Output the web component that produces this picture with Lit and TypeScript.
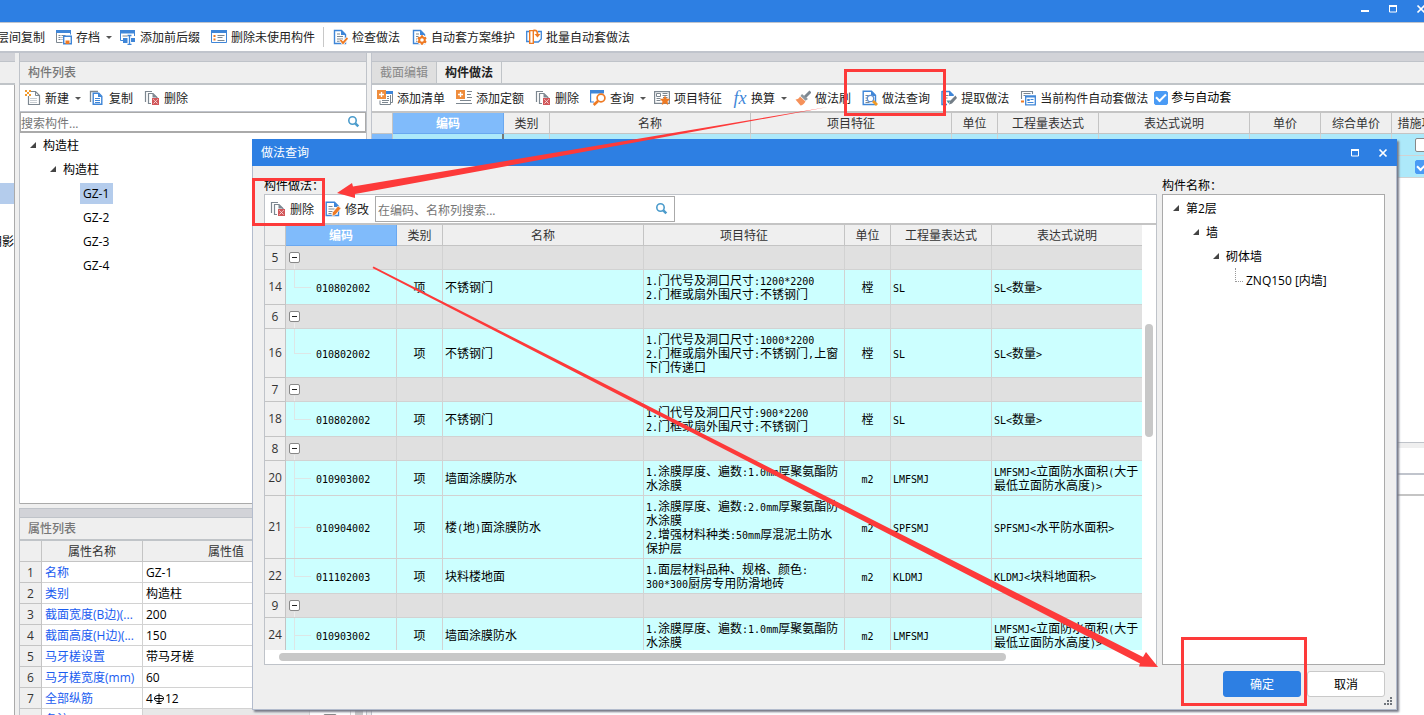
import { LitElement, html, svg, css, nothing, TemplateResult } from "lit";
import { customElement } from "lit/decorators.js";
import { classMap } from "lit/directives/class-map.js";

const GREY = "#7d8790";
const BLUE = "#3f86d8";
const ORANGE = "#ee7a24";

const docShape = svg`<path d="M2.500 1.500h7l4 4v9h-11z" fill="#fff" stroke=${BLUE} stroke-width="1.400"/><path d="M9 1l5 5H9z" fill=${BLUE}/>`;
const docLines = svg`<path d="M5 5h3M5 7.500h6M5 10h6M5 12.300h4" stroke=${GREY} stroke-width="1.100"/>`;

const ICONS: Record<string, TemplateResult> = {
  layers: svg`<path d="M1.500 4.500h9v9h-9zM4.500 1.500h10v9" fill="none" stroke=${BLUE}/>`,
  archive: svg`<path d="M.5 1.500h14v4" fill="none" stroke=${BLUE}/><path d="M0 1h15v3H0z" fill=${BLUE}/><path d="M.5 4v9.500h6" fill="none" stroke=${GREY}/><path d="M2.500 6.500h2m1 0h4M2.500 8.500h2m1 0h1M2.500 10.500h2m1 0h1" stroke=${GREY}/><path d="M7.700 7.200h7.600v7.600H7.700z" fill="#fff" stroke=${BLUE} stroke-width="1.400"/><path d="M9.500 11.500h4V15h-4z" fill=${ORANGE}/>`,
  rename: svg`<path d="M0 1h15v3.500H0z" fill=${BLUE}/><path d="M.5 4v7.500H3M14.500 4v3" fill="none" stroke=${BLUE}/><path d="M2.500 7h5" stroke=${GREY}/><path d="M3 9h4.500v5H3zM11 9h4v4h-4z" fill=${BLUE}/><path d="M7.500 6.500h4M9.500 6.500v9M7.500 15.500h4" stroke=${BLUE} stroke-width="1.300" fill="none"/>`,
  list: svg`<path d="M.5 1.500h15v12H.5z" fill="#fff" stroke=${BLUE}/><path d="M0 1h16v3H0z" fill=${BLUE}/><path d="M2.500 6h2v2h-2zM2.500 9.500h2v2h-2z" fill=${ORANGE}/><path d="M6.500 6.500h7M6.500 8.500h5M6.500 11.500h7" stroke=${GREY}/>`,
  check: svg`${docShape}${docLines}<path d="M8.500 11l2.500 3 4.500-5" fill="none" stroke="#fff" stroke-width="3.400"/><path d="M8.500 11l2.500 3 4.500-5" fill="none" stroke=${ORANGE} stroke-width="1.900"/>`,
  gear: svg`${docShape}${docLines}<circle cx="11" cy="11" r="5" fill="#fff"/><path d="M11 6.200v9.600M6.800 8.600l8.400 4.800M6.800 13.400l8.400-4.800" stroke=${ORANGE} stroke-width="2"/><circle cx="11" cy="11" r="2.800" fill="#fff" stroke=${ORANGE} stroke-width="2"/>`,
  batch: svg`<path d="M3 2.500H.7v10H3M12 2.500h3.300V10l-3 3H8" fill="none" stroke=${BLUE} stroke-width="1.300"/><path d="M3.700 1.600h3.600v12.800H3.700z" fill="#fff" stroke=${ORANGE} stroke-width="1.400"/><path d="M7.500 1.500c3-.6 4 .6 4 4" fill="none" stroke=${ORANGE} stroke-width="1.800"/><path d="M8.500 5h6l-3 3.600z" fill=${ORANGE}/>`,
  create: svg`<path d="M6 1.500h4.500l4 4v9h-11V6" fill="#fff" stroke=${GREY} stroke-width="1.200"/><path d="M10.500 1.500v4h4" fill="none" stroke=${GREY}/><path d="M5 8.500h7M5 10.500h7M5 12.500h7" stroke="#c8cdd2"/><path d="M0 0h2v2H0zM4 0h2v2H4zM2 2h2v2H2zM0 4h2v2H0zM4 4h2v2H4z" fill="#f19a2c"/>`,
  copy: svg`<path d="M1.500 12V1.500H9" fill="none" stroke=${GREY} stroke-width="1.300"/><path d="M4.200 3.200h5.600l3 3v8.100H4.200z" fill="#fff" stroke=${BLUE} stroke-width="1.400"/><path d="M9 3l4 4H9z" fill=${BLUE}/><path d="M6 8.500h5M6 10.500h5M6 12.500h5" stroke=${BLUE}/>`,
  remove: svg`<path d="M1.500 12V1.500H8" fill="none" stroke=${GREY} stroke-width="1.200"/><path d="M7 13.500H4.500v-10h4.500l4 4V9" fill="#fff" stroke=${GREY} stroke-width="1.200"/><path d="M8.500 3.500v4h5z" fill=${GREY}/><path d="M8 8h7v7H8z" fill="#d2575a"/><path d="M9.500 9.500l4 4M13.500 9.500l-4 4" stroke="#fff" stroke-width="1" stroke-dasharray="1.200 .5"/>`,
  addlist: svg`<path d="M9 1h7v3H9z" fill=${BLUE}/><path d="M15.500 4v8.500H13M13.500 5v9.500H3v-4M5 12.500h6M10 6.500h2M10 8.500h2M5 10.500h7" fill="none" stroke=${GREY}/><path d="M0 0h9v9H0z" fill="#ef8d3d"/><path d="M4.500 2v5M2 4.500h5" stroke="#fff" stroke-width="1.300"/>`,
  addquota: svg`<path d="M11 1.500h5M11 4.500h4M11 7.500h5M4 10.500h11M0 13.500h16" stroke=${GREY} stroke-width="1.200"/><path d="M0 0h9v9H0z" fill="#ef8d3d"/><path d="M4.500 2v5M2 4.500h5" stroke="#fff" stroke-width="1.300"/>`,
  query: svg`<path d="M0 0h14v3.500H0z" fill=${BLUE}/><path d="M.6 3v9H4" fill="none" stroke=${BLUE} stroke-width="1.200"/><circle cx="11" cy="8" r="3.900" fill="#fff" stroke=${ORANGE} stroke-width="1.700"/><path d="M8 11l-4.300 4" stroke=${ORANGE} stroke-width="2.600"/>`,
  feature: svg`<path d="M.6 1.600h14.800v11.800H.6z" fill="#fff" stroke=${GREY} stroke-width="1.200"/><path d="M2.500 3.500h4v3h-4z" fill="#fff" stroke=${GREY}/><path d="M8.500 3.500h5M8.500 5.500h5M2.500 8.500h4M2.500 10.500h4M9 7.500h4.500" stroke=${GREY}/><path d="M11 5.500l1.500 3.100 3.500.4-2.500 2.400.7 3.600-3.200-1.700L7.800 15l.7-3.600L6 9l3.500-.4z" fill=${ORANGE}/>`,
  brush: svg`<path d="M15.500 1.500l-6 6" stroke=${GREY} stroke-width="3"/><path d="M7 4l6 5-2.500 1.800L5.500 6z" fill="#8d979e"/><path d="M5 6.500l5.500 5C9 14 7 15.500 5.500 15.500L.5 9.500C2.500 9.500 4 8.500 5 6.500z" fill="#f5915a"/>`,
  docsearch: svg`<path d="M1.200 1.200h8.300l4 4v9.300H1.200z" fill="#fff" stroke=${BLUE} stroke-width="1.400"/><path d="M9 1l5 5H9z" fill=${BLUE}/><path d="M3.500 5.500h3M3.500 8H5M3.500 10.500H5M3.500 12.500h4" stroke=${GREY}/><circle cx="8.500" cy="8.500" r="3.200" fill="#fff" stroke="#5f8fd0" stroke-width="1.300"/><path d="M11 11l4 4" stroke="#f29a24" stroke-width="2.800"/>`,
  extract: svg`<path d="M1 1.500h7.500l4 4M1 1v13.500h5" fill="none" stroke=${BLUE} stroke-width="1.500"/><path d="M8 1l5 5H8z" fill=${BLUE}/><path d="M3.500 5.500h4M3.500 8h3" stroke=${GREY}/><path d="M8 14.500l1-3.500 5.500-5.500L16 8l-5 5.500z" fill="#737d86"/><path d="M5.500 10.500h4l-2 3z" fill="#4b93a3"/>`,
  current: svg`<path d="M1.500 9V1.500h11V4M3.500 3.500h7M3.500 5.500h2" fill="none" stroke=${GREY} stroke-width="1.100"/><path d="M5.700 6.200h9.600v8.600H5.700z" fill="#fff" stroke=${BLUE} stroke-width="1.300"/><path d="M5 5.500h11v2H5z" fill=${BLUE}/><path d="M7.500 9.500h2v1h-2zM10.500 9.500h3M7.500 12.500h6" fill="none" stroke=${BLUE}/><path d="M1 10.500h3v2H1z" fill=${ORANGE}/>`,
  edit: svg`<path d="M1.200 1.200h8.300l4 4v9.300H1.200z" fill="#fff" stroke=${BLUE} stroke-width="1.400"/><path d="M9 1l5 5H9z" fill=${BLUE}/><path d="M3.500 5.500h4M3.500 8h6M3.500 10.500h4M3.500 12.500h3" stroke=${GREY}/><path d="M7.500 11.500l5.500-6.500 3 2.300-5.500 6.500-3.300 1.500z" fill=${ORANGE} stroke="#fff" stroke-width=".6"/>`,
  search: svg`<circle cx="6.500" cy="6.500" r="3.700" fill="none" stroke="#4c9ccc" stroke-width="1.600"/><path d="M9.300 9.300l3 3" stroke="#4c9ccc" stroke-width="2.600"/>`,
};

const icon = (name: string) =>
  name === "fx"
    ? html`<span class="fx" aria-hidden="true">fx</span>`
    : html`<svg class="icon" viewBox="0 0 16 16" aria-hidden="true">${ICONS[name]}</svg>`;

const tool = (name: string, label: string, menu = false) => html`
  <button class=${classMap({ tool: true, menu })} type="button">
    ${icon(name)}<span class="label">${label}</span>${menu ? html`<i class="caret"></i>` : nothing}
  </button>`;

/** Half-width runs are set in a monospace face so two of them equal one ideograph. */
const mixed = (text: string) =>
  text.split(/([\x20-\x7e]+)/).filter(Boolean).map((part) =>
    part.charCodeAt(0) < 127 ? html`<span class="half">${part}</span>` : part);

const base = css`
  * { box-sizing: border-box; }
  button, input { font: inherit; color: inherit; }
  button { border: 0; background: none; padding: 0; margin: 0; }
  .icon { width: 16px; height: 16px; flex: none; }
  .fx { width: 14px; flex: none; font: italic 18px/16px "Liberation Serif", serif; color: #3f86d8; }
  .bar { display: flex; align-items: center; background: #fff; white-space: nowrap; overflow: hidden; }
  .tool { display: flex; align-items: center; gap: 4px; flex: none; height: 20px; padding: 0 6px 0 5px; line-height: 16px; color: #222; }
  .tool.menu { padding-right: 3px; }
  .tool .label { padding-top: 2px; }
  .caret { border: 3px solid transparent; border-top-color: #555; border-bottom: 0; margin-left: 2px; }
  .search { display: flex; align-items: center; border: 1px solid #aaa; background: #fff; }
  .search input { flex: 1; min-width: 0; border: 0; outline: 0; padding: 2px 2px 0; height: 18px; background: none; }
  .search input::placeholder { color: #757575; opacity: 1; }
  .search .icon { margin-right: 4px; }
  table { border-collapse: separate; border-spacing: 0; table-layout: fixed; }
  th, td { padding: 0; border: 0 solid #d2d2d2; border-width: 0 1px 1px 0; overflow: hidden; white-space: nowrap; }
  th { font-weight: 400; background: #efefef; border-color: #c4c4c4; color: #333; text-align: center; }
  thead th { height: 21px; padding-top: 2px; line-height: 18px; }
  thead th.active { background: #80bbfb; border-color: #6aa8f0; color: #fff; font-weight: 700; }
  .cell { font-family: "Noto Sans CJK SC", sans-serif; line-height: 14px; color: #000; }
  .half { font-family: "DejaVu Sans Mono", monospace; font-size: 10px; line-height: 0; }
  .mid { text-align: center; }
  ul { list-style: none; margin: 0; padding: 0; }
  .node { display: flex; align-items: center; height: 24px; line-height: 21px; color: #000; white-space: nowrap; }
  .node span { padding: 0 4px 0 3px; }
  .node .picked { background: #b4ccec; }
  .node .twist { width: 6px; height: 6px; margin-right: 4px; background: #444; clip-path: polygon(100% 0, 100% 100%, 0 100%); }
  .lv1 { padding-left: 10px; }
  .lv2 { padding-left: 30px; }
  .lv3 { padding-left: 50px; }
  .lv3.leaf { padding-left: 60px; }
  .tick { appearance: none; width: 14px; height: 14px; margin: 0; flex: none; border: 1px solid #888; border-radius: 2px; background: #fff; display: inline-grid; place-items: center; vertical-align: middle; }
  .tick:checked { background: #4a9bf5; border-color: #4a9bf5; }
  .tick:checked::after { content: ""; width: 8px; height: 4px; border: solid #fff; border-width: 0 0 2px 2px; transform: rotate(-45deg) translate(1px, -1px); }
`;

type Detail = { no: number; code: string; name: string; feature: string[]; unit: string; expr: string; note: string[]; last?: boolean };
type Row = Detail | { no: number };

const LMF = ["LMFSMJ<立面防水面积(大于", "最低立面防水高度)>"];
const ROWS: Row[] = [
  { no: 5 },
  { no: 14, code: "010802002", name: "不锈钢门", feature: ["1.门代号及洞口尺寸:1200*2200", "2.门框或扇外围尺寸:不锈钢门"], unit: "樘", expr: "SL", note: ["SL<数量>"], last: true },
  { no: 6 },
  { no: 16, code: "010802002", name: "不锈钢门", feature: ["1.门代号及洞口尺寸:1000*2200", "2.门框或扇外围尺寸:不锈钢门,上窗", "下门传递口"], unit: "樘", expr: "SL", note: ["SL<数量>"], last: true },
  { no: 7 },
  { no: 18, code: "010802002", name: "不锈钢门", feature: ["1.门代号及洞口尺寸:900*2200", "2.门框或扇外围尺寸:不锈钢门"], unit: "樘", expr: "SL", note: ["SL<数量>"], last: true },
  { no: 8 },
  { no: 20, code: "010903002", name: "墙面涂膜防水", feature: ["1.涂膜厚度、遍数:1.0mm厚聚氨酯防", "水涂膜"], unit: "m2", expr: "LMFSMJ", note: LMF },
  { no: 21, code: "010904002", name: "楼(地)面涂膜防水", feature: ["1.涂膜厚度、遍数:2.0mm厚聚氨酯防", "水涂膜", "2.增强材料种类:50mm厚混泥土防水", "保护层"], unit: "m2", expr: "SPFSMJ", note: ["SPFSMJ<水平防水面积>"] },
  { no: 22, code: "011102003", name: "块料楼地面", feature: ["1.面层材料品种、规格、颜色:", "300*300厨房专用防滑地砖"], unit: "m2", expr: "KLDMJ", note: ["KLDMJ<块料地面积>"], last: true },
  { no: 9 },
  { no: 24, code: "010903002", name: "墙面涂膜防水", feature: ["1.涂膜厚度、遍数:1.0mm厚聚氨酯防", "水涂膜"], unit: "m2", expr: "LMFSMJ", note: LMF },
];

const lines = (items: string[]) => items.map((t) => html`<span class="line">${mixed(t)}</span>`);

@customElement("practice-dialog")
export class PracticeDialog extends LitElement {
  static styles = [base, css`
    :host { display: flex; flex-direction: column; background: #efefef; border: 1px solid #b3bccd; border-top: 0; box-shadow: 2px 2px 2px #777a88; }
    .title { display: flex; align-items: center; height: 27px; margin: 0 -1px; padding-left: 9px; background: #2d7fe3; color: #fff; flex: none; }
    .title h1 { flex: 1; margin: 0; font-size: 12px; font-weight: 400; line-height: 16px; }
    .win { width: 28px; height: 27px; display: grid; place-items: center; }
    .win svg { width: 10px; height: 10px; }
    .content { flex: 1; min-height: 0; display: flex; gap: 5px; padding: 12px 11px 0; }
    section { display: flex; flex-direction: column; min-width: 0; min-height: 0; }
    .main { flex: 1; }
    .side { flex: 0 0 223px; }
    h2 { margin: 0; font-size: 12px; font-weight: 400; line-height: 16px; color: #000; }
    .frame { flex: 1; min-height: 0; border: 1px solid #bfc3c9; background: #fff; display: flex; flex-direction: column; }
    .side .frame { border-color: #aaa; padding-top: 1px; }
    .frame .bar { height: 30px; border-bottom: 2px solid #c4c4c4; flex: none; }
    .search { width: 300px; height: 26px; }
    .view { flex: 1; min-height: 0; display: flex; }
    .clip { flex: 1; min-width: 0; overflow: hidden; }
    .clip table { width: 878px; }
    .vtrack { width: 14px; flex: none; padding: 99px 3px 0; }
    .vtrack i { display: block; width: 8px; height: 113px; border-radius: 4px; background: #c8c8c8; }
    .htrack { height: 14px; flex: none; padding: 3px 150px 0 14px; }
    .htrack i { display: block; height: 8px; border-radius: 4px; background: #c8c8c8; }
    tbody th { line-height: 22px; }
    .group { height: 24px; }
    .group td { background: #e0e0e0; }
    .group .branch { padding-left: 3px; background: linear-gradient(#ececec, #ececec) 8px 18px / 1px 6px no-repeat #e0e0e0; }
    .fold { display: grid; place-items: center; width: 11px; height: 11px; background: #fff; border: 1px solid #888; border-radius: 2px; }
    .fold i { width: 5px; height: 1px; background: #222; }
    .detail td { background-color: #ccffff; padding: 3px 2px; }
    .detail .mid { padding: 3px 0; }
    .detail .branch { padding-left: 30px; background-image: linear-gradient(#dde6e6, #dde6e6), linear-gradient(#dde6e6, #dde6e6); background-repeat: no-repeat; background-position: 8px 0, 8px 50%; background-size: 1px 100%, 17px 1px; }
    .detail.last .branch { background-size: 1px 50%, 17px 1px; }
    .line { display: block; height: 14px; }
    .elbow { width: 8px; height: 14px; margin: -10px 0 0 12px; border: dotted #999; border-width: 0 0 1px 1px; flex: none; }
    .foot { display: flex; justify-content: flex-end; gap: 6px; height: 44px; padding: 6px 11px 0; flex: none; }
    .foot button { width: 78px; height: 26px; padding-top: 1px; border: 1px solid #c9c9c9; border-radius: 3px; background: #fff; color: #000; }
    .foot .ok { background: #2d7fe3; border-color: #2d7fe3; color: #fff; }
    .grip { position: absolute; right: 3px; bottom: 3px; width: 9px; height: 9px; }
  `];

  private row(r: Row) {
    if (!("code" in r)) {
      return html`<tr class="group"><th scope="row">${r.no}</th>
        <td class="branch"><button class="fold" type="button" aria-label="折叠"><i></i></button></td>
        <td></td><td></td><td></td><td></td><td></td><td></td></tr>`;
    }
    return html`<tr class=${classMap({ detail: true, last: !!r.last })}><th scope="row">${r.no}</th>
      <td class="cell branch">${lines([r.code])}</td>
      <td class="cell mid">${lines(["项"])}</td>
      <td class="cell">${lines([r.name])}</td>
      <td class="cell">${lines(r.feature)}</td>
      <td class="cell mid">${lines([r.unit])}</td>
      <td class="cell">${lines([r.expr])}</td>
      <td class="cell">${lines(r.note)}</td></tr>`;
  }

  render() {
    return html`
      <header class="title"><h1>做法查询</h1>
        <button class="win" type="button" aria-label="最大化"><svg viewBox="0 0 10 10"><path d="M1.500 2v6h7V2z" fill="none" stroke="#fff"/><path d="M1 1h8v2H1z" fill="#fff"/></svg></button>
        <button class="win" type="button" aria-label="关闭"><svg viewBox="0 0 10 10"><path d="M1.500 1.500l7 7M8.500 1.500l-7 7" stroke="#fff" stroke-width="1.700"/></svg></button>
      </header>
      <div class="content">
        <section class="main"><h2>构件做法：</h2>
          <div class="frame">
            <div class="bar">${tool("remove", "删除")}${tool("edit", "修改")}
              <label class="search"><input type="text" aria-label="搜索" placeholder="在编码、名称列搜索..." />${icon("search")}</label>
            </div>
            <div class="view">
              <div class="clip"><table>
                <colgroup><col width="21" /><col width="111" /><col width="46" /><col width="201" /><col width="201" /><col width="46" /><col width="101" /><col width="151" /></colgroup>
                <thead><tr><th></th><th class="active">编码</th><th>类别</th><th>名称</th><th>项目特征</th><th>单位</th><th>工程量表达式</th><th>表达式说明</th></tr></thead>
                <tbody>${ROWS.map((r) => this.row(r))}</tbody>
              </table></div>
              <div class="vtrack"><i></i></div>
            </div>
            <div class="htrack"><i></i></div>
          </div>
        </section>
        <section class="side"><h2>构件名称：</h2>
          <ul class="frame">
            <li class="node lv1"><i class="twist"></i><span>第2层</span></li>
            <li class="node lv2"><i class="twist"></i><span>墙</span></li>
            <li class="node lv3"><i class="twist"></i><span>砌体墙</span></li>
            <li class="node lv3 leaf"><i class="elbow"></i><span>ZNQ150 [内墙]</span></li>
          </ul>
        </section>
      </div>
      <footer class="foot"><button class="ok" type="button">确定</button><button type="button">取消</button></footer>
      <svg class="grip" viewBox="0 0 9 9" aria-hidden="true"><path d="M6 0h2v2H6zM3 3h2v2H3zM6 3h2v2H6zM0 6h2v2H0zM3 6h2v2H3zM6 6h2v2H6z" fill="#70757c"/></svg>
    `;
  }
}

const rebar = html`<svg class="rebar" viewBox="0 0 12 12" role="img" aria-label="HRB400"><path d="M1.500 5.500c0-2 1.500-3 4.500-3s4.500 1 4.500 3-1.500 3-4.500 3-4.500-1-4.500-3zM6 .5v10.500M1.500 5.500h9M3.500 10.500h5" fill="none" stroke="#000"/></svg>`;

const PROPS: [string, unknown][] = [
  ["名称", "GZ-1"],
  ["类别", "构造柱"],
  ["截面宽度(B边)(...", "200"],
  ["截面高度(H边)(...", "150"],
  ["马牙槎设置", "带马牙槎"],
  ["马牙槎宽度(mm)", "60"],
  ["全部纵筋", html`4${rebar}12`],
  ["备注", ""],
];

@customElement("app-root")
export class AppRoot extends LitElement {
  static styles = [base, css`
    :host { display: flex; flex-direction: column; height: 100vh; position: relative; overflow: hidden; background: #efefef; font: 12px/16px "Open Sans", "Noto Sans CJK SC", sans-serif; color: #222; }
    .title { height: 22px; flex: none; background: #2d7fe3; display: flex; justify-content: flex-end; margin-right: -11px; }
    .win { width: 28px; height: 18px; display: grid; place-items: center; }
    .win svg { width: 10px; height: 10px; }
    .ribbon { height: 31px; flex: none; border-top: 1px solid #c0c4cc; border-bottom: 2px solid #c0c4cc; }
    .ribbon .tool:first-child { margin-left: -28px; }
    .rule { width: 1px; height: 20px; background: #c8c8c8; margin: 0 3px 0 2px; flex: none; }
    .body { flex: 1; min-height: 0; display: flex; gap: 4px; }
    .col { display: flex; flex-direction: column; min-width: 0; min-height: 0; }
    .sliver { flex: 0 0 15px; overflow: hidden; }
    .left { flex: 0 0 348px; gap: 4px; }
    .right { flex: 1; gap: 5px; border-left: 1px solid #c0c4cc; }
    .band { height: 9px; flex: none; background: #d2d3d8; border-bottom: 1px solid #bfc3c9; }
    .band.top { height: 10px; border-top: 1px solid #bfc3c9; }
    .head { height: 23px; flex: none; margin: 0; padding: 0 8px; font-size: 12px; line-height: 21px; font-weight: 500; color: #777; border-bottom: 2px solid #c0c4c8; }
    .sliver .head { padding: 0; }
    .strip { flex: 1; background: #fff; border-right: 1px solid #aaa; padding-top: 98px; }
    .strip .on { height: 21px; background: #b4ccec; }
    .strip .cut { display: flex; justify-content: flex-end; padding-top: 30px; color: #000; white-space: nowrap; }
    .panel { display: flex; flex-direction: column; border: 0 solid #bfc3c9; border-width: 0 1px; min-height: 0; }
    .grow { flex: 1; }
    .panel > .bar { height: 27px; flex: none; border-bottom: 1px solid #c0c4cc; }
    .panel > .search { height: 20px; flex: none; }
    .panel > .search input { padding-left: 0; }
    .panel > .search .icon { margin-right: 3px; }
    .tree { flex: 1; background: #fff; border: solid #aaa; border-width: 1px 0; }
    .props { flex: 0 0 207px; overflow: hidden; }
    .propbox { display: flex; background: #fff; flex: 1; }
    .propbox table { width: 331px; }
    .propbox td { height: 21px; padding: 2px 3px 0; line-height: 18px; color: #000; }
    .propbox tbody th { padding-top: 2px; line-height: 18px; }
    .propbox .key { color: #1a5cf0; }
    .propbox .off { background: #e8e8e8; }
    .propbox .tickcell { text-align: center; }
    .rebar { width: 12px; height: 12px; vertical-align: -2px; }
    .track { width: 8px; margin-left: 4px; background: #c8c8c8; margin-top: 40px; }
    .tabs { display: flex; height: 23px; flex: none; border-bottom: 2px solid #c0c4c8; }
    .tabs button { width: 65px; border-right: 1px solid #c0c4c8; line-height: 21px; background: #dfdfdf; color: #888; }
    .tabs .current { background: #efefef; color: #222; font-weight: 700; }
    .work { border-width: 0 0 1px; overflow: hidden; background: #fff; }
    .work .band, .work .tabs { background-color: #d2d3d8; }
    .work .tabs { background-color: #efefef; }
    .work > .bar { height: 28px; border-bottom-width: 2px; border-color: #c4c4c4; }
    .auto { display: flex; align-items: center; gap: 3px; color: #000; }
    .work table { width: 1080px; }
    .work td { height: 22px; background: #ade9fa; padding: 0 2px; }
    .work td.here { border-right: 2px solid #777; }
    .work tbody th.here { background: #80bbfb; }
    .lower { flex: 0 0 267px; background: #fff; }
    .lower i { display: block; }
    .lower .a { height: 27px; border-bottom: 2px solid #c0c4cc; }
    .lower .b { height: 21px; border-bottom: 2px solid #c4c4c4; }
    practice-dialog { position: absolute; left: 252px; right: 27px; top: 139px; bottom: 5px; }
    .marks { position: absolute; left: 0; top: 0; width: 1424px; height: 715px; pointer-events: none; }
  `];

  render() {
    return html`
      <header class="title">
        <button class="win" type="button" aria-label="最小化"><svg viewBox="0 0 10 10"><path d="M1 6h8v2H1z" fill="#fff"/></svg></button>
        <button class="win" type="button" aria-label="最大化"><svg viewBox="0 0 10 10"><path d="M1.500 2v6h7V2z" fill="none" stroke="#fff"/><path d="M1 1h8v2H1z" fill="#fff"/></svg></button>
        <button class="win" type="button" aria-label="关闭"><svg viewBox="0 0 10 10"><path d="M1.500 1.500l7 7M8.500 1.500l-7 7" stroke="#fff" stroke-width="1.700"/></svg></button>
      </header>
      <nav class="bar ribbon">
        ${tool("layers", "层间复制")}${tool("archive", "存档", true)}${tool("rename", "添加前后缀")}${tool("list", "删除未使用构件")}
        <i class="rule"></i>
        ${tool("check", "检查做法")}${tool("gear", "自动套方案维护")}${tool("batch", "批量自动套做法")}
      </nav>
      <main class="body">
        <div class="col sliver">
          <div class="band"></div><div class="head"></div>
          <div class="strip"><div class="on"></div><div class="cut">阴影</div></div>
        </div>
        <div class="col left">
          <section class="panel grow">
            <div class="band"></div>
            <h2 class="head">构件列表</h2>
            <div class="bar">${tool("create", "新建", true)}${tool("copy", "复制")}${tool("remove", "删除")}</div>
            <label class="search"><input type="text" aria-label="搜索构件" placeholder="搜索构件..." />${icon("search")}</label>
            <ul class="tree">
              <li class="node lv1"><i class="twist"></i><span>构造柱</span></li>
              <li class="node lv2"><i class="twist"></i><span>构造柱</span></li>
              ${[1, 2, 3, 4].map((n) => html`<li class="node lv3 leaf"><span class=${classMap({ picked: n === 1 })}>GZ-${n}</span></li>`)}
            </ul>
          </section>
          <section class="panel props">
            <div class="band top"></div>
            <h2 class="head">属性列表</h2>
            <div class="propbox">
              <table>
                <colgroup><col width="22" /><col width="101" /><col width="167" /><col width="41" /></colgroup>
                <thead><tr><th></th><th>属性名称</th><th>属性值</th><th>附加</th></tr></thead>
                <tbody>${PROPS.map(([k, v], i) => html`<tr><th scope="row">${i + 1}</th><td class="key">${k}</td>
                  <td class=${classMap({ off: i === 7 })}>${v}</td>
                  <td class="tickcell">${i ? html`<input class="tick" type="checkbox" aria-label=${"附加 " + k} />` : nothing}</td></tr>`)}</tbody>
              </table>
              <i class="track"></i>
            </div>
          </section>
        </div>
        <div class="col right">
          <section class="panel work grow">
            <div class="band"></div>
            <div class="tabs"><button type="button">截面编辑</button><button class="current" type="button">构件做法</button></div>
            <div class="bar">
              ${tool("addlist", "添加清单")}${tool("addquota", "添加定额")}${tool("remove", "删除")}${tool("query", "查询", true)}${tool("feature", "项目特征")}${tool("fx", "换算", true)}${tool("brush", "做法刷")}${tool("docsearch", "做法查询")}${tool("extract", "提取做法")}${tool("current", "当前构件自动套做法")}
              <label class="auto"><input class="tick" type="checkbox" checked />参与自动套</label>
            </div>
            <table>
              <colgroup><col width="21" /><col width="111" /><col width="46" /><col width="201" /><col width="201" /><col width="46" /><col width="101" /><col width="151" /><col width="71" /><col width="71" /><col width="60" /></colgroup>
              <thead><tr><th></th><th class="active">编码</th><th>类别</th><th>名称</th><th>项目特征</th><th>单位</th><th>工程量表达式</th><th>表达式说明</th><th>单价</th><th>综合单价</th><th>措施项目</th></tr></thead>
              <tbody>
                <tr><th class="here"></th><td class="here"></td><td class="cell mid">项</td><td class="cell">构造柱</td><td></td><td></td><td></td><td class="cell">${mixed("TJ<体积>")}</td><td></td><td></td><td class="mid"><input class="tick" type="checkbox" aria-label="措施项目 1" /></td></tr>
                <tr><th></th><td></td><td></td><td></td><td></td><td></td><td></td><td></td><td></td><td></td><td class="mid"><input class="tick" type="checkbox" checked aria-label="措施项目 2" /></td></tr>
              </tbody>
            </table>
          </section>
          <section class="lower"><i class="a"></i><i class="b"></i></section>
        </div>
      </main>
      <practice-dialog></practice-dialog>
      <svg class="marks" viewBox="0 0 1424 715" aria-hidden="true">
        <g fill="none" stroke="#fd3a3a" stroke-width="3">
          <path d="M845.500 70.500h99v44h-99zM253.500 179.500h70v45h-70zM1182.500 638.500h123v66h-123z"/>
        </g>
        <g fill="#fd3a3a">
          <path d="M828 107L353 186.500 352 183 337 193 355 198 355 194z"/>
          <path d="M373.500 266.500L1143 657 1146 652 1158 667 1139 666.500 1140 663.500 372.500 268z"/>
        </g>
      </svg>
    `;
  }
}
